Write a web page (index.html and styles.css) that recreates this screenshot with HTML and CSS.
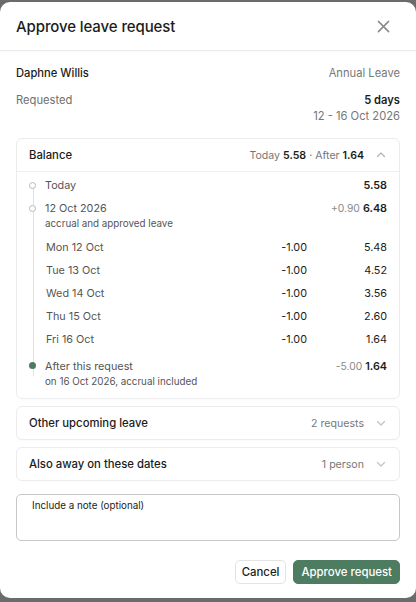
FILE: index.html
```html
<!DOCTYPE html>
<html lang="en">
<head>
    <meta charset="UTF-8">
    <meta name="viewport" content="width=device-width, initial-scale=1.0">
    <title>Approve leave request</title>
    <link rel="stylesheet" href="styles.css">
</head>
<body>
    <div class="modal">
        <div class="modal-header">
            <h1 class="title">Approve leave request</h1>
            <button class="close" aria-label="Close">
                <svg width="13" height="13" viewBox="0 0 14 14"><path d="M1.5 1.5l11 11M12.5 1.5l-11 11" stroke="#8a8a8a" stroke-width="1.6" stroke-linecap="round"/></svg>
            </button>
        </div>

        <div class="modal-body">
            <div class="row">
                <span class="name">Daphne Willis</span>
                <span class="muted">Annual Leave</span>
            </div>
            <div class="row requested">
                <span class="label">Requested</span>
                <div class="req-right">
                    <div class="days">5 days</div>
                    <div class="muted">12 - 16 Oct 2026</div>
                </div>
            </div>

            <div class="card">
                <div class="card-head open">
                    <span class="card-title">Balance</span>
                    <span class="card-meta">Today <b>5.58</b> · After <b>1.64</b>
                        <svg class="chev" width="12" height="12" viewBox="0 0 12 12"><path d="M2.5 7.5L6 4l3.5 3.5" fill="none" stroke="#b5b5b5" stroke-width="1.3" stroke-linecap="round" stroke-linejoin="round"/></svg>
                    </span>
                </div>
                <div class="timeline">
                    <div class="t-item">
                        <span class="dot"></span>
                        <div class="t-text">Today</div>
                        <div class="t-val"><b>5.58</b></div>
                    </div>
                    <div class="t-item">
                        <span class="dot"></span>
                        <div class="t-text">12 Oct 2026<div class="sub">accrual and approved leave</div></div>
                        <div class="t-val"><span class="delta">+0.90</span> <b>6.48</b></div>
                    </div>
                    <div class="days-list">
                        <div class="day"><span>Mon 12 Oct</span><span class="minus">-1.00</span><span class="bal">5.48</span></div>
                        <div class="day"><span>Tue 13 Oct</span><span class="minus">-1.00</span><span class="bal">4.52</span></div>
                        <div class="day"><span>Wed 14 Oct</span><span class="minus">-1.00</span><span class="bal">3.56</span></div>
                        <div class="day"><span>Thu 15 Oct</span><span class="minus">-1.00</span><span class="bal">2.60</span></div>
                        <div class="day"><span>Fri 16 Oct</span><span class="minus">-1.00</span><span class="bal">1.64</span></div>
                    </div>
                    <div class="t-item last">
                        <span class="dot filled"></span>
                        <div class="t-text">After this request<div class="sub">on 16 Oct 2026, accrual included</div></div>
                        <div class="t-val"><span class="delta">-5.00</span> <b>1.64</b></div>
                    </div>
                </div>
            </div>

            <div class="card">
                <div class="card-head">
                    <span class="card-title">Other upcoming leave</span>
                    <span class="card-meta muted">2 requests
                        <svg class="chev" width="12" height="12" viewBox="0 0 12 12"><path d="M2.5 4.5L6 8l3.5-3.5" fill="none" stroke="#c2c2c2" stroke-width="1.2" stroke-linecap="round" stroke-linejoin="round"/></svg>
                    </span>
                </div>
            </div>

            <div class="card">
                <div class="card-head">
                    <span class="card-title">Also away on these dates</span>
                    <span class="card-meta muted">1 person
                        <svg class="chev" width="12" height="12" viewBox="0 0 12 12"><path d="M2.5 4.5L6 8l3.5-3.5" fill="none" stroke="#c2c2c2" stroke-width="1.2" stroke-linecap="round" stroke-linejoin="round"/></svg>
                    </span>
                </div>
            </div>

            <textarea class="note" placeholder="Include a note (optional)"></textarea>
        </div>

        <div class="modal-footer">
            <button class="btn">Cancel</button>
            <button class="btn primary">Approve request</button>
        </div>
    </div>
</body>
</html>
```

FILE: styles.css
```css
body {
    margin: 0;
    background-color: #6b6b6b;
    font-family: Inter, "Noto Sans", sans-serif;
    color: #1c1c1c;
    height: 602px;
    overflow: hidden;
}

.modal {
    margin-top: 2px;
    height: 596px;
    background-color: #fff;
    border-radius: 10px;
    display: flex;
    flex-direction: column;
}

.modal-header {
    display: flex;
    justify-content: space-between;
    align-items: center;
    height: 48px;
    padding: 0 16px;
    border-bottom: 1px solid #ececec;
    box-shadow: 0 1px 2px rgba(0, 0, 0, 0.03);
}

.title {
    margin: 0;
    font-size: 15px;
    font-weight: 500;
    letter-spacing: -0.1px;
}

.close {
    background: none;
    border: 0;
    padding: 0;
    margin-right: 10px;
    display: flex;
    cursor: pointer;
}

.modal-body {
    padding: 15px 16px 0;
    flex: 1;
}

.row {
    display: flex;
    justify-content: space-between;
    align-items: center;
    font-size: 11.2px;
}

.name {
    font-weight: 500;
}

.muted {
    color: #777;
}

.requested {
    margin-top: 13px;
    align-items: flex-start;
}

.label {
    color: #6f6f6f;
}

.req-right {
    text-align: right;
}

.days {
    font-weight: 600;
    margin-bottom: 2px;
}

.card {
    border: 1px solid #ececec;
    border-radius: 6px;
    margin-top: 7px;
    box-shadow: 0 1px 2px rgba(0, 0, 0, 0.02);
}

.requested + .card {
    margin-top: 15px;
}

.card-head {
    display: flex;
    justify-content: space-between;
    align-items: center;
    height: 32px;
    padding: 0 12px;
    font-size: 11.3px;
}

.card-head.open {
    border-bottom: 1px solid #efefef;
}

.card-title {
    font-weight: 500;
}

.card-meta {
    color: #777;
    display: flex;
    align-items: center;
    gap: 3px;
    font-size: 10.6px;
}

.card-meta b {
    color: #1c1c1c;
    font-weight: 600;
}

.chev {
    margin-left: 8px;
}

.timeline {
    position: relative;
    padding: 5px 12px 10px 12px;
    font-size: 10.8px;
}

.timeline::before {
    content: "";
    position: absolute;
    left: 15.5px;
    top: 14px;
    bottom: 22px;
    width: 1px;
    background-color: #e2e2e2;
}

.t-item {
    position: relative;
    display: flex;
    justify-content: space-between;
    align-items: flex-start;
    padding-left: 16px;
    line-height: 17px;
    margin-top: 6px;
}

.t-item:first-child {
    margin-top: 0;
}

.dot {
    position: absolute;
    left: 0;
    top: 5px;
    width: 5px;
    height: 5px;
    border: 1px solid #b8b8b8;
    border-radius: 50%;
    background-color: #fff;
}

.dot.filled {
    width: 7px;
    height: 7px;
    top: 4px;
    left: 0;
    border: 0;
    background-color: #4e7c60;
}

.t-text {
    color: #555;
}

.sub {
    font-size: 9.8px;
    color: #555;
    line-height: 13px;
}

.t-val b {
    font-weight: 600;
    color: #1c1c1c;
}

.delta {
    color: #888;
    font-size: 10.3px;
}

.days-list {
    padding: 6px 0 4px 17px;
}

.day {
    display: grid;
    grid-template-columns: 1fr 70px 80px;
    height: 23px;
    align-items: center;
    color: #555;
}

.day .minus,
.day .bal {
    text-align: right;
    color: #1c1c1c;
}

.t-item.last {
    margin-top: 3px;
}

.note {
    display: block;
    width: 100%;
    box-sizing: border-box;
    margin-top: 13px;
    height: 47px;
    border: 1px solid #c8c8c8;
    border-radius: 5px;
    padding: 5px 15px;
    font-family: inherit;
    font-size: 9.8px;
    resize: none;
}

.note::placeholder {
    color: #222;
}

.modal-footer {
    display: flex;
    justify-content: flex-end;
    gap: 7px;
    padding: 0 16px 14px;
}

.btn {
    font-family: inherit;
    font-size: 11.4px;
    font-weight: 500;
    height: 24px;
    padding: 0 6px;
    border: 1px solid #e3e3e3;
    border-radius: 5px;
    background-color: #fff;
    color: #1c1c1c;
    cursor: pointer;
}

.btn.primary {
    background-color: #4e7c60;
    border-color: #4e7c60;
    color: #fff;
    padding: 0 7px;
}
```
